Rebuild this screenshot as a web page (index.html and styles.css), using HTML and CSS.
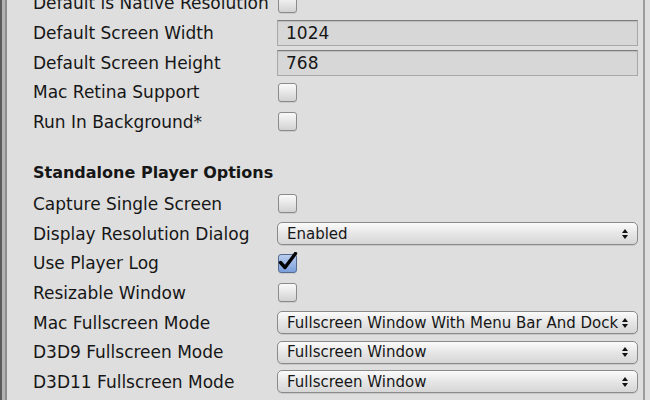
FILE: index.html
```html
<!DOCTYPE html>
<html lang="en">
<head>
    <meta charset="UTF-8">
    <title>Player Settings</title>
    <link rel="stylesheet" href="styles.css">
</head>
<body>
    <div class="window">
        <div class="edge"></div>
        <div class="inspector">
            <div class="rows">
                <div class="row">
                    <span class="label">Default is Native Resolution</span>
                    <span class="check"></span>
                </div>
                <div class="row">
                    <span class="label">Default Screen Width</span>
                    <div class="field">1024</div>
                </div>
                <div class="row">
                    <span class="label">Default Screen Height</span>
                    <div class="field">768</div>
                </div>
                <div class="row">
                    <span class="label">Mac Retina Support</span>
                    <span class="check"></span>
                </div>
                <div class="row">
                    <span class="label">Run In Background*</span>
                    <span class="check"></span>
                </div>

                <div class="row heading">Standalone Player Options</div>

                <div class="row">
                    <span class="label">Capture Single Screen</span>
                    <span class="check"></span>
                </div>
                <div class="row">
                    <span class="label">Display Resolution Dialog</span>
                    <div class="popup">Enabled<svg class="arrows" width="6" height="10" viewBox="0 0 6 10"><path d="M3 0L6 4H0Z M3 10L6 6H0Z" fill="#111"/></svg></div>
                </div>
                <div class="row">
                    <span class="label">Use Player Log</span>
                    <span class="check checked"><svg width="22" height="20" viewBox="0 0 22 20"><path d="M2.5 10.5L7 15.5L17.5 1.5" fill="none" stroke="#000" stroke-width="3.4" stroke-linecap="round" stroke-linejoin="round"/></svg></span>
                </div>
                <div class="row">
                    <span class="label">Resizable Window</span>
                    <span class="check"></span>
                </div>
                <div class="row">
                    <span class="label">Mac Fullscreen Mode</span>
                    <div class="popup">Fullscreen Window With Menu Bar And Dock<svg class="arrows" width="6" height="10" viewBox="0 0 6 10"><path d="M3 0L6 4H0Z M3 10L6 6H0Z" fill="#111"/></svg></div>
                </div>
                <div class="row">
                    <span class="label">D3D9 Fullscreen Mode</span>
                    <div class="popup">Fullscreen Window<svg class="arrows" width="6" height="10" viewBox="0 0 6 10"><path d="M3 0L6 4H0Z M3 10L6 6H0Z" fill="#111"/></svg></div>
                </div>
                <div class="row">
                    <span class="label">D3D11 Fullscreen Mode</span>
                    <div class="popup">Fullscreen Window<svg class="arrows" width="6" height="10" viewBox="0 0 6 10"><path d="M3 0L6 4H0Z M3 10L6 6H0Z" fill="#111"/></svg></div>
                </div>
            </div>
        </div>
        <div class="gutter"></div>
    </div>
</body>
</html>
```

FILE: styles.css
```css
/* General */
body {
    margin: 0;
    background-color: #dedede;
    font-family: 'DejaVu Sans', 'Liberation Sans', sans-serif;
    font-size: 17px;
    color: #161616;
    overflow: hidden;
}

.window {
    display: flex;
    height: 400px;
}

/* Left window edge */
.edge {
    width: 7px;
    flex-shrink: 0;
    background: linear-gradient(to right, #5a5a5a 0 2px, #b2b2b2 2px 5px, #8c8c8c 5px 7px);
}

.inspector {
    flex: 1;
    min-width: 0;
    border-right: 2px solid #9c9c9c;
    padding: 0 5px 0 26px;
}

.gutter {
    width: 5px;
    flex-shrink: 0;
}

.rows {
    margin-top: -11.5px;
}

/* Each property row */
.row {
    display: grid;
    grid-template-columns: 244px minmax(0, 1fr);
    align-items: center;
    height: 29.67px;
}

.label {
    white-space: nowrap;
}

.heading {
    display: flex;
    font-size: 16px;
    font-weight: bold;
    margin: 20.4px 0 2.3px;
}

/* Checkbox */
.check {
    position: relative;
    width: 17px;
    height: 17px;
    margin-left: 1px;
    border: 1px solid #8a8a8a;
    border-radius: 3px;
    background: linear-gradient(#fafafa, #d2d2d2);
    box-shadow: 0 1px 0 rgba(0, 0, 0, 0.08);
}

.check.checked {
    border-color: #56698e;
    background: linear-gradient(#b9cdee, #7b9fdb);
}

.check svg {
    position: absolute;
    left: -1px;
    top: -3px;
}

/* Text field */
.field {
    height: 24px;
    line-height: 24px;
    padding: 0 8px;
    background-color: #d7d7d7;
    border: 1px solid #a9a9a9;
    border-top-color: #7c7c7c;
    box-shadow: inset 0 1px 1px rgba(0, 0, 0, 0.12);
}

/* Popup menu */
.popup {
    display: flex;
    align-items: center;
    justify-content: space-between;
    height: 21px;
    padding: 0 9px 0 9px;
    border: 1px solid #8a8a8a;
    border-radius: 5px;
    background: linear-gradient(#fbfbfb, #e6e6e6 50%, #d6d6d6);
    box-shadow: 0 1px 0 rgba(0, 0, 0, 0.1);
    font-size: 15px;
    white-space: nowrap;
}

.arrows {
    flex-shrink: 0;
}
```
